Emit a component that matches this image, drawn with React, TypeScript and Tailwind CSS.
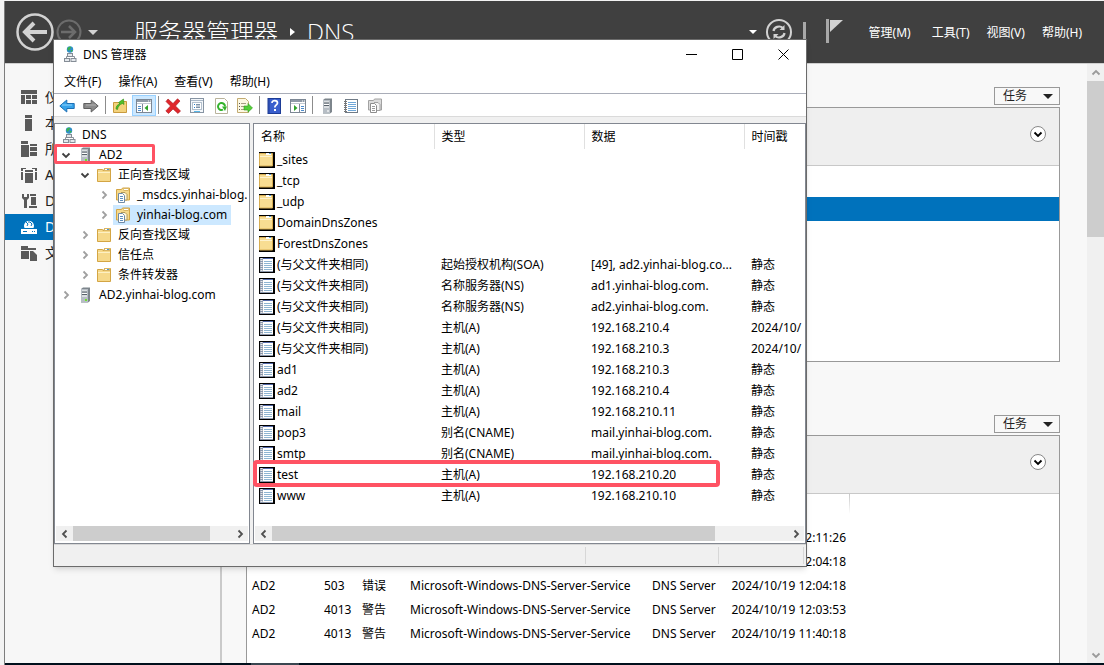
import type { ReactNode } from 'react';

interface TreeNode {
  label: string;
  icon: 'dns' | 'server' | 'folder' | 'zone';
  level: number;
  state?: 'open' | 'closed';
  selected?: boolean;
}

interface DnsRecord {
  name: string;
  folder?: boolean;
  type?: string;
  data?: string;
  stamp?: string;
}

interface ServerEvent {
  server: string;
  id: string;
  severity: string;
  source: string;
  log: string;
  time: string;
}

const treeNodes: TreeNode[] = [
  { label: 'DNS', icon: 'dns', level: 0 },
  { label: 'AD2', icon: 'server', level: 1, state: 'open' },
  { label: '正向查找区域', icon: 'folder', level: 2, state: 'open' },
  { label: '_msdcs.yinhai-blog.com', icon: 'zone', level: 3, state: 'closed' },
  { label: 'yinhai-blog.com', icon: 'zone', level: 3, state: 'closed', selected: true },
  { label: '反向查找区域', icon: 'folder', level: 2, state: 'closed' },
  { label: '信任点', icon: 'folder', level: 2, state: 'closed' },
  { label: '条件转发器', icon: 'folder', level: 2, state: 'closed' },
  { label: 'AD2.yinhai-blog.com', icon: 'server', level: 1, state: 'closed' },
];

const records: DnsRecord[] = [
  { name: '_sites', folder: true },
  { name: '_tcp', folder: true },
  { name: '_udp', folder: true },
  { name: 'DomainDnsZones', folder: true },
  { name: 'ForestDnsZones', folder: true },
  { name: '(与父文件夹相同)', type: '起始授权机构(SOA)', data: '[49], ad2.yinhai-blog.co...', stamp: '静态' },
  { name: '(与父文件夹相同)', type: '名称服务器(NS)', data: 'ad1.yinhai-blog.com.', stamp: '静态' },
  { name: '(与父文件夹相同)', type: '名称服务器(NS)', data: 'ad2.yinhai-blog.com.', stamp: '静态' },
  { name: '(与父文件夹相同)', type: '主机(A)', data: '192.168.210.4', stamp: '2024/10/' },
  { name: '(与父文件夹相同)', type: '主机(A)', data: '192.168.210.3', stamp: '2024/10/' },
  { name: 'ad1', type: '主机(A)', data: '192.168.210.3', stamp: '静态' },
  { name: 'ad2', type: '主机(A)', data: '192.168.210.4', stamp: '静态' },
  { name: 'mail', type: '主机(A)', data: '192.168.210.11', stamp: '静态' },
  { name: 'pop3', type: '别名(CNAME)', data: 'mail.yinhai-blog.com.', stamp: '静态' },
  { name: 'smtp', type: '别名(CNAME)', data: 'mail.yinhai-blog.com.', stamp: '静态' },
  { name: 'test', type: '主机(A)', data: '192.168.210.20', stamp: '静态' },
  { name: 'www', type: '主机(A)', data: '192.168.210.10', stamp: '静态' },
];

const source = 'Microsoft-Windows-DNS-Server-Service';

const events: ServerEvent[] = [
  { server: 'AD2', id: '4013', severity: '警告', source, log: 'DNS Server', time: '2024/10/19 12:11:26' },
  { server: 'AD2', id: '503', severity: '错误', source, log: 'DNS Server', time: '2024/10/19 12:04:18' },
  { server: 'AD2', id: '503', severity: '错误', source, log: 'DNS Server', time: '2024/10/19 12:04:18' },
  { server: 'AD2', id: '4013', severity: '警告', source, log: 'DNS Server', time: '2024/10/19 12:03:53' },
  { server: 'AD2', id: '4013', severity: '警告', source, log: 'DNS Server', time: '2024/10/19 11:40:18' },
];

const indents = ['pl-[3px]', 'pl-[5px]', 'pl-6', 'pl-[43px]'];

/* ---------- 16px icons ---------- */

const Icon = ({ children }: { children: ReactNode }) => (
  <svg width="16" height="16" viewBox="0 0 16 16" className="shrink-0" aria-hidden="true">
    {children}
  </svg>
);

const DnsIcon = () => (
  <Icon>
    <g transform="translate(2 0)">
      <circle cx="7" cy="3.5" r="3.2" fill="#2f8fc9" />
      <path d="M4.6 2.2c1-1.4 2.6-1.7 3.6-.9-.2 1.2-1.6 1.2-1.6 2.4 0 1-1.2 1-1.9.2zM8 4h1.700c-.3 1.2-1 1.9-1.9 2z" fill="#3db54a" />
      <path d="M7 7v4M3.5 12v-1.500h8V12" fill="none" stroke="#8a9199" />
      <rect x="4.5" y="7.5" width="5" height="3" fill="#e4e8ec" stroke="#858d96" />
      <rect x="1.5" y="12.5" width="5" height="3" fill="#e4e8ec" stroke="#858d96" />
      <rect x="8" y="12.5" width="5" height="3" fill="#e4e8ec" stroke="#858d96" />
    </g>
  </Icon>
);

const ServerIcon = ({ led = true }: { led?: boolean }) => (
  <Icon>
    <path d="M4 2l2-1.500h7V14l-2 1.500H4z" fill="#7d858c" />
    <rect x="4" y="2" width="7" height="13.5" fill="#b6bdc4" />
    <path d="M5 4h5M5 6.500h5M5 9h5" stroke="#fff" />
    <path d="M5 5h5M5 7.500h5" stroke="#59626b" />
    <rect x="8" y="12" width="2" height="2" fill={led ? '#6fe02c' : '#dfe3e6'} />
  </Icon>
);

const FolderIcon = () => (
  <Icon>
    <path d="M1.5 2.500h5l1 1.500 1-2.500h6v13h-13z" fill="#f6d98b" stroke="#d3a544" />
    <rect x="8.5" y="1.5" width="5" height="2" fill="#fff" stroke="#d9b566" />
    <rect x="11" y="2" width="2" height="1" fill="#4d9bd6" />
    <path d="M2 5.500h12" stroke="#fdf0c4" />
  </Icon>
);

const ZoneIcon = () => (
  <Icon>
    <path d="M1.5 2.500h5l1-1.500h7v12h-13z" fill="#f6d98b" stroke="#d3a544" />
    <rect x="9" y="1.5" width="4" height="2" fill="#fff" stroke="#d9b566" />
    <path d="M6 5.500h4l2 2V13H9" fill="#fff8e0" stroke="#b39a5c" />
    <path d="M3.5 6.500h4l2 2v7h-6z" fill="#fff" stroke="#6f8aa5" />
    <path d="M5 9.500h3M5 11.500h3M5 13.500h3" stroke="#5d8fc0" />
  </Icon>
);

const ListFolderIcon = () => (
  <Icon>
    <rect width="16" height="16" fill="#000" />
    <path d="M.5 1.500h6l1 1 1-1h5v12.500H.5z" fill="#f8dd92" stroke="#d8ae52" />
    <rect x="7" y="1" width="5" height="2" fill="#fff" />
    <rect x="10" y="1" width="2" height="1" fill="#4d9bd6" />
    <path d="M1 4.500h12" stroke="#fef2cc" />
  </Icon>
);

const RecordIcon = () => (
  <Icon>
    <rect width="16" height="16" fill="#000" />
    <rect x="1" y="1" width="13" height="14" fill="#8c98ad" />
    <rect x="4" y="2" width="10" height="12" fill="#fff" />
    <path d="M4 1.500h10" stroke="#5268a8" />
    <path d="M5 4.500h8M5 6.500h8M5 8.500h8M5 10.500h8M5 12.500h8" stroke="#8fb5d2" />
    <path d="M2.5 1v14" stroke="#e8e8e8" strokeDasharray="1 1" strokeWidth="2" />
  </Icon>
);

const ArrowIcon = ({ back }: { back?: boolean }) => (
  <Icon>
    {back ? (
      <path d="M.8 8l7-6v3.500h7.400v5H7.800V14z" fill="#36a3ea" stroke="#1d6fb4" />
    ) : (
      <path d="M15.2 8l-7-6v3.500H.8v5h7.400V14z" fill="#8b8b8b" stroke="#5f5f5f" />
    )}
    <path d="M3 7h10" stroke={back ? '#8fd2fb' : '#b3b3b3'} />
  </Icon>
);

const UpFolderIcon = () => (
  <Icon>
    <path d="M1.5 4.500h5l1 1 1-2h6v11h-13z" fill="#f3d27c" stroke="#c99b3e" />
    <path d="M4 11c0-3 1.500-4.500 4-5L6.500 4.500 11.500 1l.5 5.500-1.500-1C8 6.500 6 8 5.500 11.500z" fill="#4fbf2a" stroke="#2e8f17" strokeWidth=".6" />
  </Icon>
);

const TreePaneIcon = ({ right }: { right?: boolean }) => (
  <Icon>
    <rect x=".5" y="1.5" width="15" height="13" fill="#fff" stroke="#7c8794" />
    <rect x="1" y="2" width="14" height="2" fill="#8f9aa7" />
    <path d="M1 5.500h14" stroke="#c3cad2" />
    <path d="M12 3h1M14 3h1" stroke="#fff" />
    {right ? (
      <>
        <path d="M9.5 6v8" stroke="#7c8794" />
        <path d="M11 8.500h3M11 10.500h3M11 12.500h3" stroke="#4d8ccc" />
        <path d="M4 7v6l3.500-3z" fill="#2fa32a" />
      </>
    ) : (
      <>
        <path d="M6.5 6v8" stroke="#7c8794" />
        <path d="M2 8.500h3M2 10.500h3M2 12.500h3" stroke="#4d8ccc" />
        <path d="M12 7v6l-3.500-3z" fill="#2fa32a" />
      </>
    )}
  </Icon>
);

const DeleteIcon = () => (
  <Icon>
    <path d="M3 1l5 4.500L12.500.8 15 3l-4.500 5 5 5-2.500 2.500L8 11l-4.500 4.500L.8 13 5.500 8 1 3.500z" fill="#e0262b" stroke="#a8161c" strokeWidth=".6" />
  </Icon>
);

const PropertiesIcon = () => (
  <Icon>
    <rect x="1.5" y=".5" width="13" height="14" fill="#f4f7fa" stroke="#8794a3" />
    <path d="M2 2.500h12" stroke="#a9b7c6" />
    <rect x="3.5" y="4.5" width="9" height="7" fill="#fff" stroke="#b3c0cd" />
    <path d="M5 6.500h1M5 9.500h1" stroke="#1f7fd0" />
    <path d="M7 6.500h4M7 8h4M7 9.500h4" stroke="#7d92a8" />
    <path d="M5 13.500h6" stroke="#58b7e8" />
  </Icon>
);

const RefreshIcon = () => (
  <Icon>
    <path d="M2.5.5h9l3 3v12h-12z" fill="#fff" stroke="#b9b39b" />
    <path d="M12 8.500a3.500 3.500 0 1 0-2 3.200" fill="none" stroke="#35b32d" strokeWidth="2" />
    <path d="M9 8.500h5L12 13z" fill="#35b32d" />
  </Icon>
);

const ExportIcon = () => (
  <Icon>
    <path d="M.5.500h8l3 3v11H.5z" fill="#fdf8e2" stroke="#c2ab72" />
    <path d="M2 5.500h1M2 8.500h1M2 11.500h1" stroke="#555" />
    <path d="M4 5.500h5M4 8.500h4M4 11.500h4" stroke="#a79d83" />
    <path d="M7 8h4V5.500L15.500 10 11 14.200V12H7z" fill="#55cf38" stroke="#2e9a1c" strokeWidth=".6" />
  </Icon>
);

const HelpIcon = () => (
  <Icon>
    <rect x="2" y=".5" width="12.500" height="15" fill="#3a5fcd" stroke="#1d3c96" />
    <path d="M3 1v14" stroke="#24439d" />
    <path d="M6 5c0-3.300 5.500-3 5.500 0 0 1.800-2.700 2-2.700 4.500" fill="none" stroke="#fff" strokeWidth="1.700" />
    <rect x="8" y="11" width="2" height="2" fill="#fff" />
  </Icon>
);

const NotebookIcon = () => (
  <Icon>
    <rect x="2.5" y="1.5" width="12" height="13" fill="#fff" stroke="#707b86" />
    <path d="M5 4.500h8M5 6.500h8M5 8.500h8M5 10.500h8M5 12.500h8" stroke="#6fa7d8" />
    <path d="M1 3.500h3M1 5.500h3M1 7.500h3M1 9.500h3M1 11.500h3M1 13.500h3" stroke="#777" />
  </Icon>
);

const ZoneGrayIcon = () => (
  <Icon>
    <path d="M1.5 2.500h5l1-1.500h7v11h-13z" fill="#dcdcdc" stroke="#a2a2a2" />
    <path d="M7 4.500h4l2 2v6H9" fill="#f4f4f4" stroke="#a2a2a2" />
    <path d="M3.5 5.500h4l2 2v7h-6z" fill="#fff" stroke="#8d8d8d" />
    <path d="M5 8.500h3M5 10.500h3M5 12.500h3" stroke="#9a9a9a" />
  </Icon>
);

const Chevron = ({ dir, color = '#505050' }: { dir: 'up' | 'down' | 'left' | 'right'; color?: string }) => {
  const paths = {
    up: 'M1.5 6.500L5 3l3.500 3.500',
    down: 'M1.5 3.500L5 7l3.500-3.500',
    left: 'M6.5 1.500L3 5l3.500 3.500',
    right: 'M3.5 1.500L7 5 3.500 8.500',
  };
  return (
    <svg width="10" height="10" viewBox="0 0 10 10" className="shrink-0" aria-hidden="true">
      <path d={paths[dir]} fill="none" stroke={color} strokeWidth="1.800" />
    </svg>
  );
};

const Caret = ({ className }: { className: string }) => (
  <svg width="10" height="5" viewBox="0 0 10 5" className={className} aria-hidden="true">
    <path d="M0 0h10L5 5z" fill="currentColor" />
  </svg>
);

/* ---------- server manager ---------- */

const sideItems: { label: string; active?: boolean; icon: ReactNode }[] = [
  {
    label: '仪表板',
    icon: <path d="M0 1h16v4H0zM0 6h4v9H0zM5 6h5v4H5zM11 6h5v4h-5zM5 11h5v4H5zM11 11h5v4h-5z" />,
  },
  { label: '本地服务器', icon: <path d="M4 0h7v3H4zM4 4h7v12H4z" /> },
  { label: '所有服务器', icon: <path d="M0 0h7v3H0zM0 4h8v12H0zM9 3h7v2H9zM9 6h7v4H9zM9 11h7v4H9z" /> },
  { label: 'AD DS', icon: <path d="M0 1h5v1H2v2H0zM11 1h5v3h-2V2h-3zM0 5h2v8H0zM14 5h2v8h-2zM4 3h8v2H4zM4 6h8v10H4z" /> },
  {
    label: 'DHCP',
    icon: <path d="M1 1v4l2 2v8h3V7l2-2V1H6v3H3V1zM9 1h6v2H9zM10 4h5v8h-5zM8 13h8v2H8z" />,
  },
  {
    label: 'DNS',
    active: true,
    icon: (
      <>
        <path d="M3.500 9a5 5 0 1 1 9 0zM0 10h16v5H0z" />
        <path d="M5 3l2 2-1 2M9 3l2 2-1 2M8 1v3M2 12.500h4M11 12.500h1M13 12.500h1" stroke="#0072bc" fill="none" />
      </>
    ),
  },
  { label: '文件和存储服务', icon: <path d="M0 1h7v2h8v2H0zM0 6h8v8H0zM9 6h3l4 4v6H9z" /> },
];

const Header = () => (
  <header className="flex h-[63px] shrink-0 items-center border-b border-[#cfcfcf] bg-[#404040] pr-[22px] pl-[11px] text-white">
    <button aria-label="后退">
      <svg width="38" height="38" viewBox="0 0 38 38" fill="none" stroke="#d2d2d2">
        <circle cx="19" cy="19" r="17.5" strokeWidth="2.500" />
        <path d="M31 19H10M18 10l-9 9 9 9" strokeWidth="4" />
      </svg>
    </button>
    <button aria-label="前进" className="ml-0.5">
      <svg width="26" height="26" viewBox="0 0 26 26" fill="none" stroke="#6c6c6c">
        <circle cx="13" cy="13" r="11.5" strokeWidth="2" />
        <path d="M5 13h14M13 7l6 6-6 6" strokeWidth="2.500" />
      </svg>
    </button>
    <button aria-label="历史记录" className="ml-1.5">
      <Caret className="text-[#d2d2d2]" />
    </button>
    <h1 className="ml-9 flex items-center font-['Open_Sans','Noto_Sans_CJK_SC',sans-serif] text-2xl font-light">
      服务器管理器
      <svg width="5" height="8" viewBox="0 0 5 8" className="mx-3" aria-hidden="true">
        <path d="M0 0v8l5-4z" fill="#fff" />
      </svg>
      DNS
    </h1>
    <div className="ml-auto flex items-center">
      <svg width="8" height="4" viewBox="0 0 8 4" aria-hidden="true">
        <path d="M0 0h8L4 4z" fill="#fff" />
      </svg>
      <button aria-label="刷新" className="ml-2">
        <svg width="28" height="28" viewBox="0 0 28 28" fill="none" stroke="#d2d2d2">
          <circle cx="14" cy="14" r="12" strokeWidth="2" />
          <path d="M8.5 13c.5-4 6-6 9.500-3M19.500 15c-.5 4-6 6-9.500 3" strokeWidth="2.200" />
          <path d="M19.5 7v5h-5zM8.500 21v-5h5z" fill="#d2d2d2" stroke="none" />
        </svg>
      </button>
      <span className="ml-2.5 h-5 w-[3px] bg-[#a8a8a8]" />
      <button aria-label="通知" className="mr-[26px] ml-5">
        <svg width="17" height="28" viewBox="0 0 17 28">
          <path d="M0 1h3v24H0z" fill="#a8a8a8" />
          <path d="M4 2h13L4 14z" fill="#d2d2d2" />
        </svg>
      </button>
      <nav className="flex gap-[17px] pt-0.5 text-xs">
        <button className="mr-1">管理(M)</button>
        <button>工具(T)</button>
        <button>视图(V)</button>
        <button>帮助(H)</button>
      </nav>
    </div>
  </header>
);

const TaskButton = () => (
  <button className="flex h-[18px] w-[66px] items-center justify-between self-end border border-[#999] bg-[#f8f8f8] pr-1.5 pl-2 text-xs text-[#222]">
    任务
    <Caret className="text-[#222]" />
  </button>
);

const PanelHead = () => (
  <div className="flex h-[58px] shrink-0 items-start justify-end border-b border-[#c8c8c8] bg-[#efefef] pt-[18px] pr-[13px]">
    <button aria-label="展开" className="flex size-4 items-center justify-center rounded-full border border-[#888] bg-white">
      <Chevron dir="down" color="#000" />
    </button>
  </div>
);

const ServerManager = () => (
  <div className="flex min-h-0 flex-1">
    <aside className="w-[217px] shrink-0 border-r-2 border-[#cacaca] bg-[#f7f7f7] pt-5">
      {sideItems.map((item) => (
        <a
          key={item.label}
          href="#"
          className={
            item.active
              ? 'flex h-[26px] items-center gap-2 bg-[#0072bc] pl-4 text-sm text-white'
              : 'flex h-[26px] items-center gap-2 pl-4 text-sm text-[#222]'
          }
        >
          <svg width="16" height="16" viewBox="0 0 16 16" fill={item.active ? '#fff' : '#5a5a5a'} aria-hidden="true">
            {item.icon}
          </svg>
          {item.label}
        </a>
      ))}
    </aside>

    <main className="flex min-w-0 flex-1 flex-col bg-[#f8f8f8] pt-[23px] pr-[27px] pl-6">
      <TaskButton />
      <section className="mt-0.5 flex h-[255px] shrink-0 flex-col border border-[#999] bg-white">
        <PanelHead />
        <div className="mt-[31px] h-6 bg-[#0072bc]" />
      </section>

      <div className="mt-[53px] flex min-h-0 flex-1 flex-col">
        <TaskButton />
        <section className="mt-0.5 flex min-h-0 flex-1 flex-col border border-b-0 border-[#999] bg-white">
          <PanelHead />
          <table className="w-full table-fixed text-left text-xs whitespace-nowrap text-black">
            <colgroup>
              <col className="w-[72px]" />
              <col className="w-[38px]" />
              <col className="w-12" />
              <col className="w-[242px]" />
              <col className="w-[75px]" />
              <col className="w-32" />
              <col />
            </colgroup>
            <tbody>
              <tr className="h-8 align-top">
                <td colSpan={6}>
                  <div className="ml-auto h-5 w-px bg-linear-to-b from-[#c8c8c8] to-white" />
                </td>
                <td />
              </tr>
              {events.map((event, index) => (
                <tr key={index} className="h-6">
                  <td className="pl-[5px]">{event.server}</td>
                  <td className="pl-[5px]">{event.id}</td>
                  <td className="pl-[5px]">{event.severity}</td>
                  <td className="pl-[5px]">{event.source}</td>
                  <td className="pl-[5px]">{event.log}</td>
                  <td className="pr-1 text-right">{event.time}</td>
                  <td />
                </tr>
              ))}
            </tbody>
          </table>
        </section>
      </div>
    </main>

    <div className="flex w-[17px] shrink-0 flex-col bg-[#f0f0f0]">
      <button aria-label="向上滚动" className="flex h-[17px] items-center justify-center">
        <Chevron dir="up" color="#9a9a9a" />
      </button>
      <div className="h-[156px] bg-[#cdcdcd]" />
      <button aria-label="向下滚动" className="mt-auto flex h-[17px] items-center justify-center">
        <Chevron dir="down" color="#9a9a9a" />
      </button>
    </div>
  </div>
);

/* ---------- DNS manager window ---------- */

const ToolButton = ({ label, pressed, children }: { label: string; pressed?: boolean; children: ReactNode }) => (
  <button
    aria-label={label}
    className={
      pressed
        ? 'flex h-[21px] w-6 items-center justify-center border border-[#99d1ff] bg-[#cce8ff]'
        : 'flex h-[21px] w-6 items-center justify-center'
    }
  >
    {children}
  </button>
);

const Separator = () => <span className="mx-0.5 h-[18px] w-px self-center bg-[#8c8c8c]" />;

const Toolbar = () => (
  <div className="flex h-6 items-end border-t border-b border-t-[#a9adb8] border-b-[#dadada] pl-px">
    <ToolButton label="后退"><ArrowIcon back /></ToolButton>
    <ToolButton label="前进"><ArrowIcon /></ToolButton>
    <Separator />
    <ToolButton label="上一级"><UpFolderIcon /></ToolButton>
    <ToolButton label="显示/隐藏控制台树" pressed><TreePaneIcon /></ToolButton>
    <Separator />
    <ToolButton label="删除"><DeleteIcon /></ToolButton>
    <ToolButton label="属性"><PropertiesIcon /></ToolButton>
    <ToolButton label="刷新"><RefreshIcon /></ToolButton>
    <ToolButton label="导出列表"><ExportIcon /></ToolButton>
    <Separator />
    <ToolButton label="帮助"><HelpIcon /></ToolButton>
    <ToolButton label="显示/隐藏操作窗格"><TreePaneIcon right /></ToolButton>
    <Separator />
    <ToolButton label="新建服务器"><ServerIcon led={false} /></ToolButton>
    <ToolButton label="新建记录"><NotebookIcon /></ToolButton>
    <ToolButton label="新建区域"><ZoneGrayIcon /></ToolButton>
  </div>
);

const HScroll = ({ thumb }: { thumb: string }) => (
  <div className="mx-px mt-auto mb-0.5 flex h-[15px] shrink-0 bg-[#f0f0f0]">
    <button aria-label="向左滚动" className="flex w-[17px] items-center justify-center">
      <Chevron dir="left" />
    </button>
    <div className="min-w-0 flex-1">
      <div className={thumb} />
    </div>
    <button aria-label="向右滚动" className="flex w-[17px] items-center justify-center">
      <Chevron dir="right" />
    </button>
  </div>
);

const nodeIcons = {
  dns: <DnsIcon />,
  server: <ServerIcon />,
  folder: <FolderIcon />,
  zone: <ZoneIcon />,
};

const Tree = () => (
  <div className="relative flex w-[196px] shrink-0 flex-col border border-[#828790] bg-white">
    <ul className="mr-0.5 overflow-hidden pt-px">
      {treeNodes.map((node) => (
        <li key={node.label} className={indents[node.level]}>
          <button className="flex h-5 items-center whitespace-nowrap">
            {node.state && (
              <span className="mr-[3px] flex w-3 justify-center">
                {node.state === 'open' ? <Chevron dir="down" color="#404040" /> : <Chevron dir="right" color="#a0a0a0" />}
              </span>
            )}
            <span
              className={
                node.selected
                  ? 'flex h-5 items-center gap-1.5 bg-[#cce8ff] pr-1 pl-0.5'
                  : 'flex items-center gap-1.5 pl-0.5'
              }
            >
              {nodeIcons[node.icon]}
              {node.label}
            </span>
          </button>
        </li>
      ))}
    </ul>
    <HScroll thumb="h-full w-[87%] bg-[#cdcdcd]" />
    {/* highlight around AD2 */}
    <div className="absolute top-5 -left-px h-5 w-[101px] rounded-xs border-3 border-[#ff5263]" />
  </div>
);

const RecordList = () => (
  <div className="relative flex min-w-0 flex-1 flex-col border border-[#828790] bg-white">
    <div className="mr-0.5 overflow-hidden">
      <table className="w-full table-fixed text-left whitespace-nowrap">
        <colgroup>
          <col className="w-[180px]" />
          <col className="w-[150px]" />
          <col className="w-40" />
          <col />
        </colgroup>
        <thead>
          <tr className="h-[25px]">
            <th className="border-r border-[#e0e0e0] pl-[7px] font-normal">名称</th>
            <th className="border-r border-[#e0e0e0] pl-[7px] font-normal">类型</th>
            <th className="border-r border-[#e0e0e0] pl-[7px] font-normal">数据</th>
            <th className="pl-[7px] font-normal">时间戳</th>
          </tr>
        </thead>
        <tbody>
          {records.map((record, index) => (
            <tr key={index} className="h-[21px]">
              <td className="pl-[5px]">
                <span className="flex items-center gap-0.5">
                  {record.folder ? <ListFolderIcon /> : <RecordIcon />}
                  {record.name}
                </span>
              </td>
              <td className="pl-[7px]">{record.type}</td>
              <td className="pl-[7px]">{record.data}</td>
              <td className="pl-[7px]">{record.stamp}</td>
            </tr>
          ))}
        </tbody>
      </table>
    </div>
    <HScroll thumb="h-full w-[86%] bg-[#cdcdcd]" />
    {/* highlight around the test record */}
    <div className="absolute top-[336px] -left-px h-[27px] w-[467px] rounded-sm border-4 border-[#ff5263]" />
  </div>
);

const DnsWindow = () => (
  <div className="absolute top-[39px] left-[53px] flex w-[754px] flex-col border border-[#6b6b6b] bg-white text-xs text-black shadow-md">
    <div className="flex h-7 items-center pl-[7px]">
      <DnsIcon />
      <span className="ml-1.5 pt-0.5">DNS 管理器</span>
      <div className="ml-auto flex">
        <button aria-label="最小化" className="flex h-7 w-[46px] items-center justify-center">
          <svg width="11" height="11" viewBox="0 0 11 11"><path d="M0 5.500h11" stroke="#000" /></svg>
        </button>
        <button aria-label="最大化" className="flex h-7 w-[46px] items-center justify-center">
          <svg width="11" height="11" viewBox="0 0 11 11"><path d="M.5.500h10v10H.5z" stroke="#000" fill="none" /></svg>
        </button>
        <button aria-label="关闭" className="flex h-7 w-[46px] items-center justify-center">
          <svg width="11" height="11" viewBox="0 0 11 11"><path d="M.5.500l10 10M10.500.500l-10 10" stroke="#000" fill="none" /></svg>
        </button>
      </div>
    </div>
    <div className="flex h-[25px] items-center gap-[17px] pt-0.5 pl-2.5">
      <button>文件(F)</button>
      <button>操作(A)</button>
      <button>查看(V)</button>
      <button>帮助(H)</button>
    </div>
    <Toolbar />
    <div className="flex h-[427px] gap-[3px] bg-[#f0f0f0] pt-1.5">
      <Tree />
      <RecordList />
    </div>
    <div className="flex h-[22px] justify-end border-t border-[#d7d7d7] bg-[#f0f0f0] py-0.5 pr-0.5">
      <span className="w-[133px] border-l border-[#d7d7d7]" />
      <span className="w-[86px] border-x border-[#d7d7d7]" />
    </div>
  </div>
);

const App = () => {
  return (
    <div className="h-screen overflow-hidden bg-[#f3f3f3] pt-px pl-1 font-['Noto_Sans','Noto_Sans_CJK_SC',sans-serif]">
      <div className="flex h-full flex-col border-l border-[#7d7d7d]">
        <Header />
        <ServerManager />
        <footer className="flex h-0.5 shrink-0 bg-[#00101c]">
          <span className="ml-[246px] w-12 bg-[#3a4650]" />
        </footer>
      </div>
      <DnsWindow />
    </div>
  );
};

export default App;
